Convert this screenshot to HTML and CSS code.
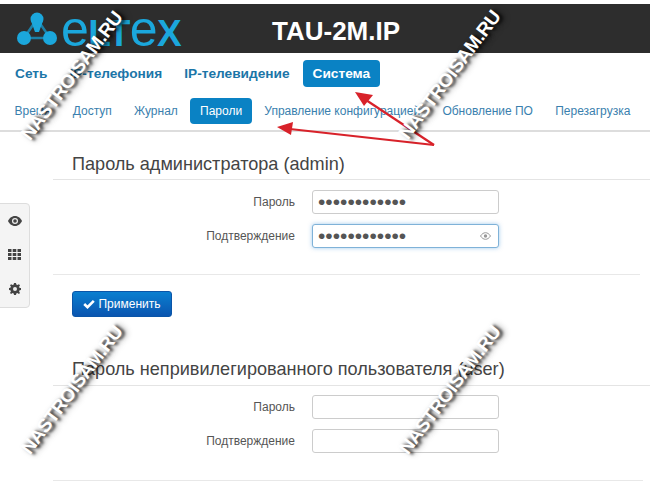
FILE: index.html
```html
<!DOCTYPE html>
<html lang="ru">
<head>
<meta charset="UTF-8" />
<title>TAU-2M.IP</title>
<link rel="stylesheet" href="styles.css">
</head>
<body>
<header class="topbar">
  <div class="logo">
    <svg class="logo-mark" width="40" height="34" viewBox="0 0 40 34">
      <path d="M20 7 L7 26 H33 Z" fill="none" stroke="#1c7fa6" stroke-width="2.500"/>
      <path d="M14 9 H26 L22 20 H18 Z" fill="#1ba7dc"/>
      <circle cx="20" cy="7" r="6.500" fill="#1ba7dc"/>
      <circle cx="7" cy="26" r="7" fill="#1ba7dc"/>
      <circle cx="33" cy="26" r="7" fill="#1ba7dc"/>
    </svg>
    <span class="logo-text"><span class="logo-e">e</span>LT<span class="logo-e">e</span>X</span>
  </div>
  <h1 class="device">TAU-2M.IP</h1>
</header>

<nav class="nav-main">
  <a href="#">Сеть</a>
  <a href="#">IP-телефония</a>
  <a href="#">IP-телевидение</a>
  <a href="#" class="active">Система</a>
</nav>
<nav class="nav-sub">
  <a href="#">Время</a>
  <a href="#">Доступ</a>
  <a href="#">Журнал</a>
  <a href="#" class="active">Пароли</a>
  <a href="#">Управление конфигурацией</a>
  <a href="#">Обновление ПО</a>
  <a href="#">Перезагрузка</a>
</nav>

<div class="content">
  <aside class="sidebar">
    <svg width="14" height="10" viewBox="0 0 14 10"><path d="M7 0C3.500 0 1.200 2.500 0 5c1.200 2.500 3.500 5 7 5s5.800-2.500 7-5c-1.200-2.500-3.500-5-7-5z" fill="#444"/><circle cx="7" cy="5" r="3" fill="#eee"/><circle cx="7" cy="5" r="1.800" fill="#444"/></svg>
    <svg width="13" height="11" viewBox="0 0 13 11" fill="#444"><path d="M0 0h3.500v3H0zM4.700 0h3.600v3H4.700zM9.500 0H13v3H9.500zM0 4h3.500v3H0zM4.700 4h3.600v3H4.700zM9.500 4H13v3H9.500zM0 8h3.500v3H0zM4.700 8h3.600v3H4.700zM9.500 8H13v3H9.500z"/></svg>
    <svg width="12" height="12" viewBox="0 0 12 12"><path d="M5 0h2l.3 1.600 1.200.5L9.900 1.200l1.100 1.100-.9 1.400.5 1.200L12 5v2l-1.400.3-.5 1.200.9 1.400-1.100 1.100-1.400-.9-1.200.5L7 12H5l-.3-1.400-1.200-.5-1.400.9L1 9.900l.9-1.400-.5-1.200L0 7V5l1.400-.3.500-1.200L1 2.300l1.100-1.100 1.400.9 1.200-.5z" fill="#444"/><circle cx="6" cy="6" r="2" fill="#eee"/></svg>
  </aside>

  <section class="block">
    <h2 class="block-title">Пароль администратора (admin)</h2>
    <form class="form">
      <div class="row">
        <label for="adm1">Пароль</label>
        <input id="adm1" class="filled" type="password" value="************">
      </div>
      <div class="row">
        <label for="adm2">Подтверждение</label>
        <div class="field">
          <input id="adm2" class="filled focused" type="password" value="************">
          <svg class="reveal" width="11" height="8" viewBox="0 0 11 8"><path d="M.5 4C2 1.800 3.600.7 5.500.7S9 1.800 10.500 4C9 6.200 7.400 7.300 5.500 7.300S2 6.200.5 4z" fill="none" stroke="#999"/><circle cx="5.500" cy="4" r="1.700" fill="#999"/></svg>
        </div>
      </div>
    </form>
  </section>

  <div class="actions">
    <button type="button" class="btn-apply">
      <svg width="12" height="10" viewBox="0 0 12 10"><path d="M1.200 5 4.500 8.200 10.800 1.800" fill="none" stroke="#fff" stroke-width="2.600"/></svg>
      Применить
    </button>
  </div>

  <section class="block block-user">
    <h2 class="block-title">Пароль непривилегированного пользователя (user)</h2>
    <form class="form">
      <div class="row">
        <label for="usr1">Пароль</label>
        <input id="usr1" type="password">
      </div>
      <div class="row">
        <label for="usr2">Подтверждение</label>
        <input id="usr2" type="password">
      </div>
    </form>
  </section>
</div>

<svg class="arrows" width="650" height="494" viewBox="0 0 650 494">
  <g fill="none" stroke="#d8222a" stroke-width="2.200">
    <path d="M434 145 366 100"/>
    <path d="M434 145 290 129"/>
  </g>
  <path d="M355 92 373 95 364 106Z" fill="#d8222a"/>
  <path d="M277 127 293 122 291 135Z" fill="#d8222a"/>
</svg>

<span class="mark mark-a">NASTROISAM.RU</span>
<span class="mark mark-b">NASTROISAM.RU</span>
<span class="mark mark-c">NASTROISAM.RU</span>
<span class="mark mark-d">NASTROISAM.RU</span>
</body>
</html>
```

FILE: styles.css
```css
html, body {
  margin: 0;
  padding: 0;
}
body {
  position: relative;
  width: 650px;
  height: 494px;
  overflow: hidden;
  background: #fff;
  font-family: "Liberation Sans", Arial, sans-serif;
  color: #555;
}
a {
  text-decoration: none;
}

.topbar {
  display: flex;
  align-items: center;
  height: 49px;
  margin-top: 4px;
  background: #2d2d2d;
}
.logo {
  display: flex;
  align-items: center;
  gap: 4px;
  width: 272px;
  padding-left: 17px;
  box-sizing: border-box;
}
.logo-text {
  color: #1ba7dc;
  font-size: 37px;
  font-weight: bold;
  line-height: 1;
  letter-spacing: -0.5px;
}
.logo-e {
  font-size: 50px;
  font-weight: normal;
}
.device {
  margin: 6px 0 0;
  color: #fff;
  font-size: 26px;
  font-weight: bold;
}

.nav-main {
  display: flex;
  align-items: center;
  height: 26px;
  margin-top: 7px;
  padding-left: 4px;
}
.nav-main a {
  padding: 6px 11px;
  color: #1b76a8;
  font-size: 13.700px;
  font-weight: bold;
  border-radius: 4px;
}
.nav-main a.active {
  padding: 6px 10px;
  margin-left: 2px;
  background: #0a82c4;
  color: #fff;
}

.nav-sub {
  display: flex;
  align-items: center;
  gap: 2.200px;
  height: 26px;
  margin-top: 12px;
  padding-bottom: 6px;
  padding-left: 4.500px;
  border-bottom: 2px solid #ddd;
  white-space: nowrap;
}
.nav-sub a {
  padding: 6px 10px;
  color: #3a7fae;
  font-size: 12px;
  border-radius: 4px;
}
.nav-sub a.active {
  background: #0a82c4;
  color: #fff;
}

.content {
  position: relative;
}
.sidebar {
  position: absolute;
  top: 71px;
  left: -1px;
  display: flex;
  flex-direction: column;
  align-items: center;
  justify-content: space-between;
  box-sizing: border-box;
  width: 31px;
  height: 105px;
  padding: 12px 0;
  background: #f4f4f4;
  border: 1px solid #ddd;
  border-radius: 0 4px 4px 0;
}

.block {
  margin-left: 53px;
  margin-right: 10px;
  padding-bottom: 26px;
  border-bottom: 1px solid #e8e8e8;
}
.block-title {
  margin: 0 -10px 0 0;
  padding: 22px 0 5px 19px;
  border-bottom: 1px solid #e4e4e4;
  color: #444;
  font-size: 18.100px;
  line-height: 20px;
  font-weight: normal;
}
.form {
  display: flex;
  flex-direction: column;
  gap: 10px;
  padding-top: 10px;
}
.row {
  display: flex;
  align-items: center;
  gap: 17px;
}
.row label {
  width: 242px;
  font-size: 12px;
  text-align: right;
}
.row input {
  box-sizing: border-box;
  width: 187px;
  height: 24px;
  padding: 0 5px;
  background: #fff;
  border: 1px solid #ccc;
  border-radius: 3px;
  color: #555;
  font-size: 13px;
  outline: none;
}
.row input.filled {
  font-size: 21px;
}
.row input.focused {
  border-color: #7fb2d8;
  box-shadow: 0 0 4px rgba(70, 150, 220, 0.5);
}
.field {
  position: relative;
  display: flex;
}
.reveal {
  position: absolute;
  top: 8px;
  right: 8px;
}

.actions {
  margin-top: 16px;
  padding-left: 72px;
}
.btn-apply {
  display: flex;
  align-items: center;
  justify-content: center;
  gap: 3px;
  box-sizing: border-box;
  width: 100px;
  height: 26px;
  background: linear-gradient(#0a7fd0, #0a55b0);
  border: 1px solid #0a55a8;
  border-radius: 3px;
  color: #fff;
  font-family: inherit;
  font-size: 12px;
}

.block-user {
  margin-top: 20px;
  margin-right: 7px;
  padding-bottom: 27px;
}
.block-user .block-title {
  margin-right: -7px;
  padding-bottom: 6px;
}
.block-user .form {
  padding-top: 9px;
}

.arrows {
  position: absolute;
  top: 0;
  left: 0;
}
.mark {
  position: absolute;
  width: 160px;
  color: #fff;
  font-size: 19px;
  font-weight: bold;
  line-height: 20px;
  letter-spacing: -0.4px;
  text-align: center;
  white-space: nowrap;
  transform: rotate(-53deg);
  text-shadow: 2px 3px 3px rgba(0, 0, 0, 0.75), 3px 4px 6px rgba(0, 0, 0, 0.4);
}
.mark-a { left: -8px; top: 66px; }
.mark-b { left: 370px; top: 65px; }
.mark-c { left: -8px; top: 380px; }
.mark-d { left: 370px; top: 380px; }
```
